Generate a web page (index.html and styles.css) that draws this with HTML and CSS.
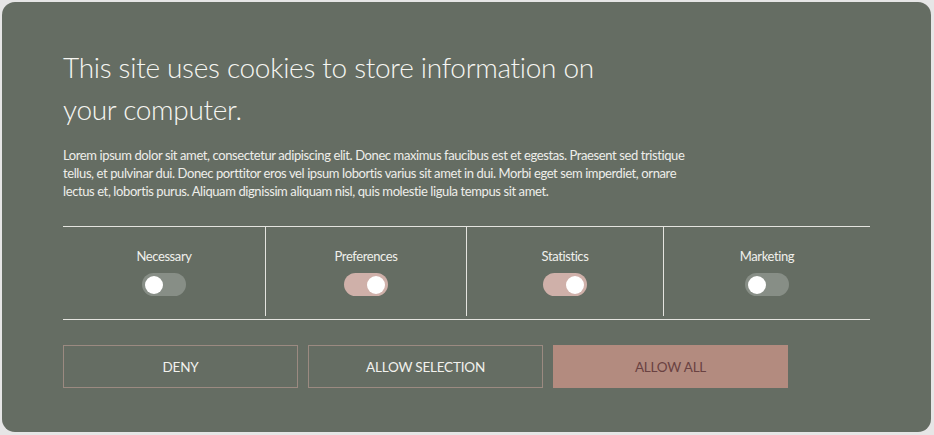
FILE: index.html
```html
<!DOCTYPE html>
<html lang="en">
<head>
<meta charset="utf-8">
<title>Cookie consent</title>
<link rel="stylesheet" href="styles.css">
</head>
<body>
<div class="banner">
  <h1 class="title">This site uses cookies to store information on<br>your computer.</h1>
  <p class="desc">Lorem ipsum dolor sit amet, consectetur adipiscing elit. Donec maximus faucibus est et egestas. Praesent sed tristique tellus, et pulvinar dui. Donec porttitor eros vel ipsum lobortis varius sit amet in dui. Morbi eget sem imperdiet, ornare lectus et, lobortis purus. Aliquam dignissim aliquam nisl, quis molestie ligula tempus sit amet.</p>
  <div class="cats">
    <div class="cat">
      <span class="cat-label">Necessary</span>
      <span class="toggle"><span class="knob"></span></span>
    </div>
    <div class="cat">
      <span class="cat-label">Preferences</span>
      <span class="toggle on"><span class="knob"></span></span>
    </div>
    <div class="cat">
      <span class="cat-label">Statistics</span>
      <span class="toggle on"><span class="knob"></span></span>
    </div>
    <div class="cat">
      <span class="cat-label">Marketing</span>
      <span class="toggle"><span class="knob"></span></span>
    </div>
  </div>
  <div class="actions">
    <button class="btn">DENY</button>
    <button class="btn">ALLOW SELECTION</button>
    <button class="btn primary">ALLOW ALL</button>
  </div>
</div>
</body>
</html>
```
FILE: styles.css
```css
html, body {
  margin: 0;
  padding: 0;
  background: #e6e6e6;
}
body {
  padding: 2px 3px 3px 2px;
  font-family: "Lato", "Open Sans", sans-serif;
}
.banner {
  background: #656d63;
  border-radius: 13px;
  height: 430px;
  box-sizing: border-box;
  padding: 44px 61px 0 61px;
  color: #f2f2ee;
}
.title {
  margin: 0;
  font-weight: 300;
  font-size: 28px;
  line-height: 42px;
  letter-spacing: -0.3px;
  color: #f6f6f2;
}
.desc {
  margin: 16px 0 0 0;
  width: 640px;
  font-size: 13px;
  line-height: 18px;
  letter-spacing: -0.4px;
  color: #eeeeea;
}
.cats {
  margin-top: 26px;
  width: 807px;
  display: grid;
  grid-template-columns: 202px 201px 197px 207px;
  border-top: 1.5px solid #e4e4df;
  border-bottom: 1.5px solid #e4e4df;
  height: 94px;
  box-sizing: border-box;
}
.cat {
  display: flex;
  flex-direction: column;
  align-items: center;
  padding-top: 21px;
  border-left: 1.5px solid #e4e4df;
  margin-bottom: 3px;
}
.cat:first-child {
  border-left: none;
}
.cat-label {
  font-size: 13px;
  line-height: 16px;
  letter-spacing: -0.4px;
  color: #f0f0ec;
}
.toggle {
  margin-top: 9px;
  width: 44px;
  height: 23px;
  border-radius: 12px;
  background: #878e86;
  display: flex;
  align-items: center;
  padding: 0 3px;
  box-sizing: border-box;
}
.toggle.on {
  background: #cfb0a9;
  justify-content: flex-end;
}
.knob {
  width: 18px;
  height: 18px;
  border-radius: 50%;
  background: #ffffff;
}
.actions {
  margin-top: 25px;
  display: flex;
  gap: 10px;
}
.btn {
  width: 235px;
  height: 43px;
  background: transparent;
  border: 1.5px solid #9b8a81;
  color: #f2f2ee;
  font-family: "Lato", sans-serif;
  font-size: 13.5px;
  font-weight: 400;
  letter-spacing: -0.2px;
  padding: 0;
}
.btn.primary {
  background: #b38b7f;
  border-color: #b38b7f;
  color: #6a4242;
}
```
